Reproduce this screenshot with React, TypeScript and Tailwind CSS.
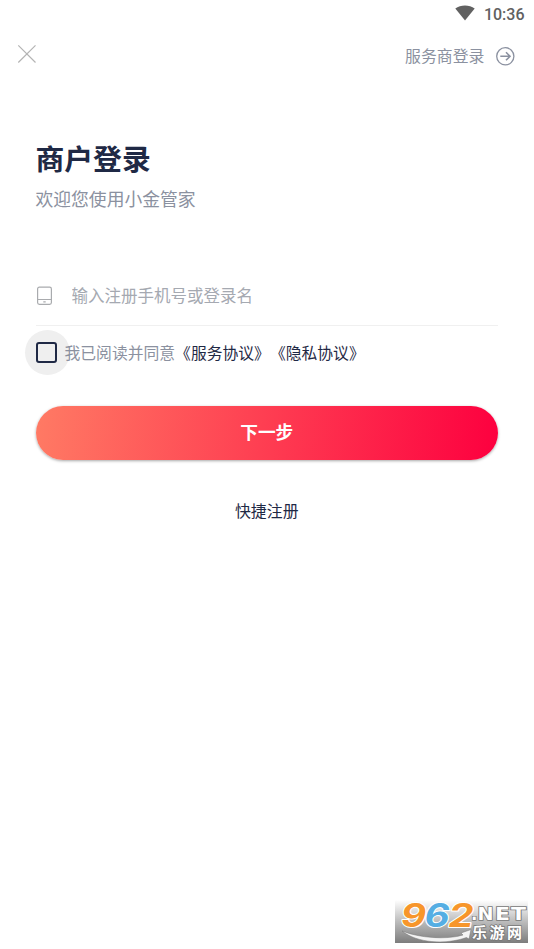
import React, { useState } from "react";

function StatusBar() {
  return (
    <div className="flex h-7 items-center justify-end gap-[9px] pr-[9.500px] text-[#616161]">
      <svg width="20" height="16" viewBox="0 0 20 16" fill="currentColor" className="mb-0.5">
        <path d="M10 15.6 0.3 3.6C5.6-.6 14.400-.6 19.700 3.600Z" />
      </svg>
      <span className="pt-0.5 font-[Roboto,sans-serif] text-[16px] font-medium leading-7">10:36</span>
    </div>
  );
}

function Header() {
  return (
    <header className="flex h-14 items-center justify-between pl-[17px] pr-[19.500px]">
      <button aria-label="关闭" className="mb-1">
        <svg width="20" height="20" viewBox="0 0 20 20" fill="none" stroke="#b4b4b4" strokeWidth="1.2">
          <path d="M1.300 1.300 18.500 18.500M18.500 1.300 1.300 18.500" />
        </svg>
      </button>
      <button className="flex items-center gap-[11px] text-[15.900px] leading-6 text-[#8b91a0]">
        服务商登录
        <svg width="19" height="19" viewBox="0 0 19 19" fill="none" stroke="currentColor" strokeWidth="1.300">
          <circle cx="9.300" cy="9.300" r="8.600" />
          <path d="M4.300 9.300H14M10 5.300 14 9.300 10 13.300" strokeWidth="1.600" />
        </svg>
      </button>
    </header>
  );
}

function SiteMark() {
  return (
    <svg width="133" height="43" viewBox="0 0 133 43" className="overflow-visible">
      <defs>
        <linearGradient id="shade" x1="0" y1="0" x2="0" y2="1">
          <stop offset="0" stopColor="#ffffff" />
          <stop offset="0.500" stopColor="#bcbcbc" />
          <stop offset="1" stopColor="#7d7d7d" />
        </linearGradient>
      </defs>
      <rect width="133" height="43" fill="url(#shade)" />
      <path d="M7 31C24 38 52 40 68 35L66 33 76 29.500 74 39 71.500 37.500C50 45 22 43 7 31Z" fill="#f4f4f4" stroke="#777777" strokeWidth="0.500" />
      <g fontFamily="Inter, sans-serif" fontWeight="700" fontStyle="italic" fontSize="32" stroke="#ffffff" strokeWidth="2" paintOrder="stroke" strokeLinejoin="round">
        <text x="6" y="26.500" textLength="25" lengthAdjust="spacingAndGlyphs" fill="#f7962b">9</text>
        <text x="29.500" y="26.500" textLength="25" lengthAdjust="spacingAndGlyphs" fill="#55aee3">6</text>
        <text x="53.500" y="26.500" textLength="25" lengthAdjust="spacingAndGlyphs" fill="#f7962b">2</text>
      </g>
      <g fill="#ffffff" stroke="#777777" strokeWidth="1.500" paintOrder="stroke" fontWeight="700">
        <g fontFamily="DejaVu Sans, sans-serif" fontSize="17">
          <text x="76" y="20">.</text>
          <text x="82.500" y="20" textLength="16" lengthAdjust="spacingAndGlyphs">N</text>
          <text x="100" y="20" textLength="15" lengthAdjust="spacingAndGlyphs">E</text>
          <text x="116" y="20" textLength="15" lengthAdjust="spacingAndGlyphs">T</text>
        </g>
        <text x="77" y="37.500" fontFamily="Noto Sans CJK SC, sans-serif" fontSize="15" textLength="50">乐游网</text>
      </g>
    </svg>
  );
}

export default function App() {
  const [phone, setPhone] = useState("");
  const [agreed, setAgreed] = useState(false);

  return (
    <div lang="zh-CN" className="flex h-[949px] w-[534px] flex-col bg-white font-['Noto_Sans_CJK_SC',sans-serif] text-[#1f2945]">
      <StatusBar />
      <Header />
      <main className="flex flex-col pl-[35.500px] pr-9 pt-[53px]">
        <h1 className="text-[28.800px] font-bold leading-[42px]">商户登录</h1>
        <p className="mt-[5px] text-[17.800px] leading-7 text-[#8b91a0]">欢迎您使用小金管家</p>

        <div className="mt-[54px] flex h-[60px] items-center border-b border-[#f0f0f0]">
          <svg width="17" height="20" viewBox="0 0 17 20" fill="none" stroke="#a9abae" strokeWidth="1.200">
            <rect x="1.600" y="1.200" width="13.800" height="17.200" rx="1.800" />
            <path d="M1.600 13.500H15.400M7.300 15.900H9.700" />
          </svg>
          <input
            value={phone}
            onChange={(e) => setPhone(e.target.value)}
            placeholder="输入注册手机号或登录名"
            className="mb-px ml-[19px] h-8 flex-1 text-[16.500px] outline-none placeholder:text-[#a5a9b1]"
          />
        </div>

        <div className="-ml-[11px] mt-1 flex h-[45px] items-center text-[15.800px] leading-6">
          <button
            role="checkbox"
            aria-checked={agreed}
            aria-label="同意协议"
            onClick={() => setAgreed(!agreed)}
            className="-mr-[5px] flex size-[45px] shrink-0 items-center justify-center rounded-full bg-[#efefef] pr-px"
          >
            <span className={`size-[21px] rounded-[3px] border-2 border-[#1f2945] ${agreed ? "bg-[#1f2945]" : ""}`} />
          </button>
          <span className="whitespace-nowrap text-[#8b91a0]">
            我已阅读并同意
            <span className="inline-block text-[#1f2945]">《服务协议》</span>
            <span className="inline-block text-[#1f2945]">《隐私协议》</span>
          </span>
        </div>

        <button className="mt-[31px] h-[54px] rounded-full bg-[linear-gradient(95deg,#ff7a64,#fd003f)] pb-[3px] text-[17.700px] font-bold text-white shadow-[0_1px_3px_rgba(0,0,0,0.35)]">
          下一步
        </button>
        <button className="mt-[39px] self-center text-[15.900px] leading-6">快捷注册</button>
      </main>
      <footer className="mb-1.5 mr-1.5 mt-auto flex justify-end">
        <SiteMark />
      </footer>
    </div>
  );
}
